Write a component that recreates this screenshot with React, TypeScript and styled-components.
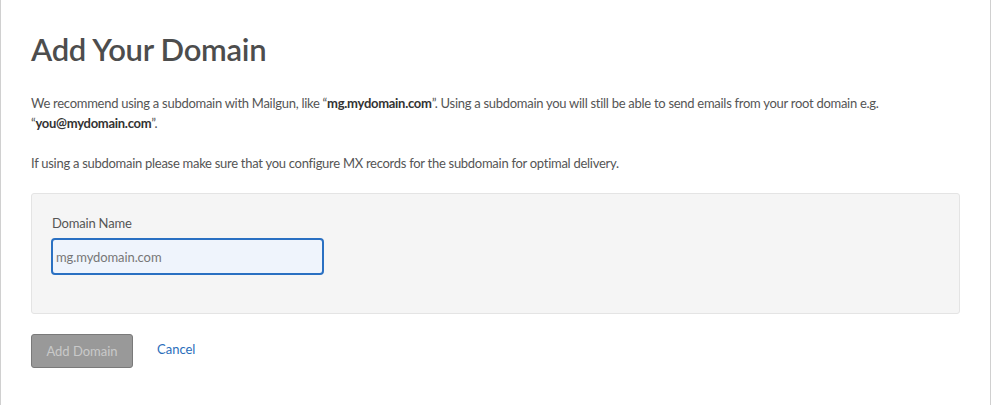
import React from "react";
import styled, { createGlobalStyle } from "styled-components";

const Global = createGlobalStyle`
  html, body { margin: 0; padding: 0; background: #fff; }
  body { font-family: Lato, "Noto Sans", sans-serif; color: #555; }
  * { box-sizing: border-box; }
`;

const Page = styled.div`
  width: 991px;
  min-height: 405px;
  border-left: 1px solid #d0d0d0;
  border-right: 1px solid #d0d0d0;
  padding: 29px 30px 0 30px;
`;

const Title = styled.h1`
  margin: 0 0 24px 0;
  font-size: 31px;
  line-height: 40px;
  font-weight: 600;
  letter-spacing: -0.3px;
  color: #4d4d4d;
`;

const Para = styled.p`
  margin: 0 0 20px 0;
  font-size: 13px;
  line-height: 20px;
  letter-spacing: -0.28px;
  color: #555;
  b { font-weight: 700; color: #333; }
`;

const FormBox = styled.div`
  margin-top: 15px;
  width: 929px;
  height: 121px;
  background: #f5f5f5;
  border: 1px solid #e4e4e4;
  border-radius: 3px;
  padding: 20px 20px 0 20px;
`;

const Label = styled.label`
  display: block;
  font-size: 13px;
  line-height: 18px;
  letter-spacing: -0.2px;
  color: #555;
  margin-bottom: 6px;
`;

const Input = styled.input`
  display: block;
  width: 273px;
  height: 37px;
  margin-left: -1px;
  border: 2px solid #2a70c2;
  border-radius: 4px;
  background: #eff4fc;
  padding: 0 3px;
  font-family: inherit;
  font-size: 13px;
  letter-spacing: -0.1px;
  color: #555;
  outline: none;
  &::placeholder { color: #777; }
`;

const Actions = styled.div`
  display: flex;
  align-items: center;
  gap: 24px;
  margin-top: 20px;
`;

const Button = styled.button`
  width: 102px;
  height: 34px;
  background: #999;
  border: 1px solid #7a7a7a;
  border-radius: 3px;
  color: #c9c9c9;
  font-family: inherit;
  font-size: 13px;
  padding: 0;
`;

const CancelLink = styled.a`
  font-size: 13px;
  color: #2a6ebb;
  text-decoration: none;
  margin-top: -5px;
`;

export default function App() {
  return (
    <>
      <Global />
      <Page>
        <Title>Add Your Domain</Title>
        <Para>
          We recommend using a subdomain with Mailgun, like “<b>mg.mydomain.com</b>”. Using a subdomain you will still be able to send emails from your root domain e.g.
          <br />“<b>you@mydomain.com</b>”.
        </Para>
        <Para>If using a subdomain please make sure that you configure MX records for the subdomain for optimal delivery.</Para>
        <FormBox>
          <Label>Domain Name</Label>
          <Input placeholder="mg.mydomain.com" />
        </FormBox>
        <Actions>
          <Button disabled>Add Domain</Button>
          <CancelLink href="#">Cancel</CancelLink>
        </Actions>
      </Page>
    </>
  );
}
